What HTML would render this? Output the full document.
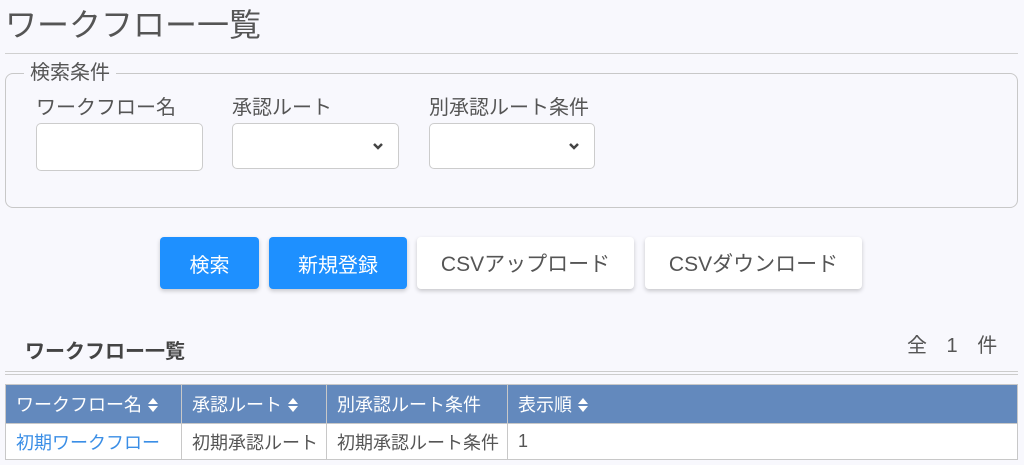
<!DOCTYPE html>
<html><head><meta charset="utf-8"><style>
*{box-sizing:border-box;margin:0;padding:0}
body{width:1024px;height:465px;background:#f8f8fd;font-family:"Liberation Sans","Noto Sans CJK JP",sans-serif;color:#555;position:relative;overflow:hidden}
.a{position:absolute;white-space:nowrap}
.inp{position:absolute;background:#fff;border:1px solid #ccc;border-radius:5px}
.chev{position:absolute;right:14px;top:17px}
.btn{position:absolute;top:237px;height:52px;border-radius:4px;font-size:20px;display:flex;align-items:center;justify-content:center;box-shadow:0 2px 4px rgba(0,0,0,.2)}
.blue{background:#1e90ff;color:#fff}
.white{background:#fff;color:#555}
table{position:absolute;left:5px;top:384px;width:1013px;border-collapse:collapse;font-size:18px;table-layout:fixed}
td,th{border:1px solid #c8c8c8;padding:0 10px;text-align:left;font-weight:normal;white-space:nowrap;overflow:hidden}
th{background:#6389bd;color:#fff;height:39px}
td{background:#fff;height:36px;color:#555}
.sort{display:inline-block;vertical-align:middle;margin-left:6px;margin-top:-3px}
</style></head><body>
<div class="a" style="left:5px;top:0px;font-size:32px;color:#555">ワークフロー一覧</div>
<div class="a" style="left:5px;top:53px;width:1013px;height:1px;background:#d0d0d0"></div>
<div class="a" style="left:5px;top:73px;width:1013px;height:135px;border:1px solid #c8c8c8;border-radius:8px"></div>
<div class="a" style="left:24px;top:61px;padding:0 6px;background:#f8f8fd;font-size:20px;line-height:24px">検索条件</div>
<div class="a" style="left:36px;top:91px;font-size:20px">ワークフロー名</div>
<div class="a" style="left:232px;top:91px;font-size:20px">承認ルート</div>
<div class="a" style="left:429px;top:91px;font-size:20px">別承認ルート条件</div>
<div class="inp" style="left:36px;top:123px;width:167px;height:48px"></div>
<div class="inp" style="left:232px;top:123px;width:167px;height:46px"><svg class="chev" width="12" height="10" viewBox="0 0 12 10"><path d="M2 3 L6 7 L10 3" stroke="#444" stroke-width="2.5" fill="none"/></svg></div>
<div class="inp" style="left:429px;top:123px;width:166px;height:46px"><svg class="chev" width="12" height="10" viewBox="0 0 12 10"><path d="M2 3 L6 7 L10 3" stroke="#444" stroke-width="2.5" fill="none"/></svg></div>
<div class="btn blue" style="left:160px;width:99px">検索</div>
<div class="btn blue" style="left:269px;width:138px">新規登録</div>
<div class="btn white" style="left:417px;width:217px;font-size:21px">CSVアップロード</div>
<div class="btn white" style="left:645px;width:217px;font-size:21px">CSVダウンロード</div>
<div class="a" style="left:25px;top:335px;font-size:20px;font-weight:bold;color:#444">ワークフロー一覧</div>
<div class="a" style="left:907px;top:329px;font-size:20px;word-spacing:14px">全 1 件</div>
<div class="a" style="left:5px;top:371px;width:1013px;height:1px;background:#ccc"></div>
<div class="a" style="left:5px;top:374px;width:1013px;height:1px;background:#ccc"></div>
<table>
<colgroup><col style="width:176px"><col style="width:145px"><col style="width:181px"><col></colgroup>
<tr><th>ワークフロー名<svg class="sort" width="10" height="16" viewBox="0 0 10 16"><path d="M0 7 L5 1 L10 7Z M0 9 L5 15 L10 9Z" fill="#fff"/></svg></th>
<th>承認ルート<svg class="sort" width="10" height="16" viewBox="0 0 10 16"><path d="M0 7 L5 1 L10 7Z M0 9 L5 15 L10 9Z" fill="#fff"/></svg></th>
<th>別承認ルート条件</th>
<th>表示順<svg class="sort" width="10" height="16" viewBox="0 0 10 16"><path d="M0 7 L5 1 L10 7Z M0 9 L5 15 L10 9Z" fill="#fff"/></svg></th></tr>
<tr><td style="color:#3a8ee6">初期ワークフロー</td><td>初期承認ルート</td><td>初期承認ルート条件</td><td>1</td></tr>
</table>
</body></html>
